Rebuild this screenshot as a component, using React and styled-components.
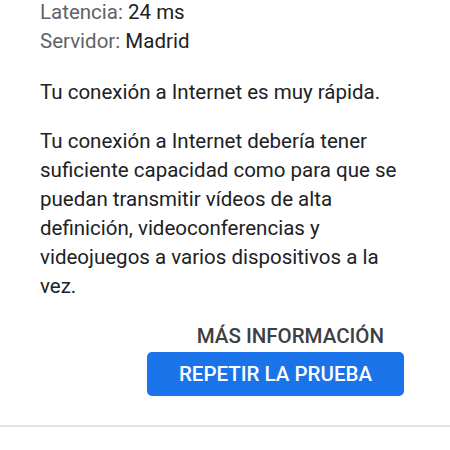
import React from 'react';
import styled, { createGlobalStyle } from 'styled-components';

const GlobalStyle = createGlobalStyle`
  html, body {
    margin: 0;
    padding: 0;
    background: #fff;
  }
  body {
    font-family: Roboto, "Noto Sans", sans-serif;
  }
`;

const Page = styled.div`
  width: 450px;
  height: 450px;
  overflow: hidden;
  background: #fff;
  display: flex;
  flex-direction: column;
`;

const Content = styled.div`
  padding: 0 40px;
  margin-top: -2px;
  font-size: 20.5px;
  line-height: 29px;
  color: #202124;
`;

const StatLine = styled.div`
  margin: 0;
`;

const Label = styled.span`
  color: #5f6368;
`;

const Paragraph = styled.p`
  margin: ${(p) => p.$top || 0}px 0 0;
`;

const Actions = styled.div`
  display: flex;
  flex-direction: column;
  align-items: flex-end;
  padding-right: 46px;
  margin-top: 18px;
`;

const TextButton = styled.button`
  border: none;
  background: none;
  padding: 0 20px;
  height: 33px;
  font-family: Roboto, sans-serif;
  font-size: 20.5px;
  font-weight: 500;
  color: #3c4043;
  cursor: pointer;
`;

const PrimaryButton = styled.button`
  border: none;
  width: 257px;
  height: 44px;
  border-radius: 5px;
  background: #1a73e8;
  color: #fff;
  font-family: Roboto, sans-serif;
  font-size: 20.5px;
  font-weight: 500;
  cursor: pointer;
`;

const Divider = styled.hr`
  border: none;
  border-top: 2px solid #e3e3e3;
  margin: 29px 0 0;
`;

export default function App() {
  return (
    <Page>
      <GlobalStyle />
      <Content>
        <StatLine>
          <Label>Latencia:</Label> 24 ms
        </StatLine>
        <StatLine>
          <Label>Servidor:</Label> Madrid
        </StatLine>
        <Paragraph $top={22}>Tu conexión a Internet es muy rápida.</Paragraph>
        <Paragraph $top={20}>
          Tu conexión a Internet debería tener suficiente capacidad como para que se
          puedan transmitir vídeos de alta definición, videoconferencias y
          videojuegos a varios dispositivos a la vez.
        </Paragraph>
      </Content>
      <Actions>
        <TextButton>MÁS INFORMACIÓN</TextButton>
        <PrimaryButton>REPETIR LA PRUEBA</PrimaryButton>
      </Actions>
      <Divider />
    </Page>
  );
}
